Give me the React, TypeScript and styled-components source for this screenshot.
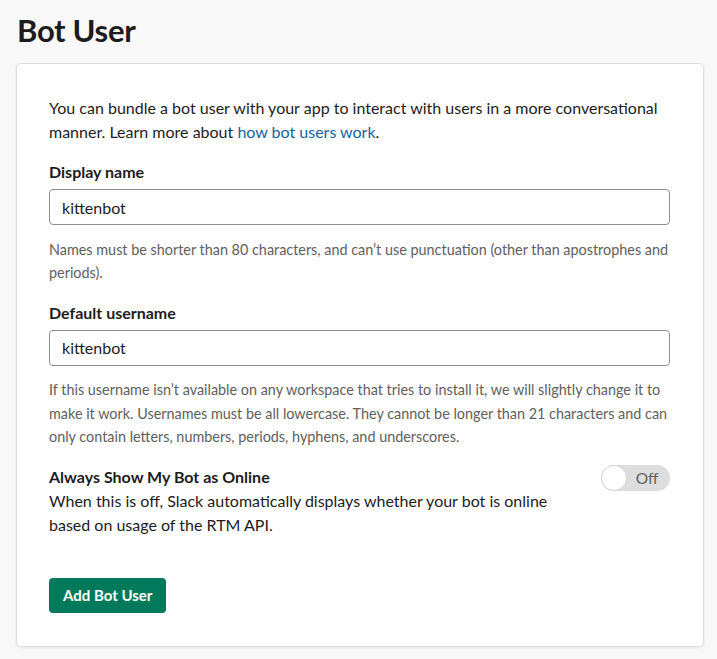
import React from "react";
import styled, { createGlobalStyle } from "styled-components";

const GlobalStyle = createGlobalStyle`
  html, body {
    margin: 0;
    padding: 0;
    background: #f8f8f8;
  }
  body {
    font-family: Lato, "Noto Sans", "Liberation Sans", sans-serif;
    color: #1d1c1d;
    -webkit-font-smoothing: antialiased;
  }
`;

const Page = styled.div`
  padding: 10px 13px 13px 16px;
`;

const Title = styled.h1`
  margin: 0 0 13px 1px;
  font-size: 31px;
  line-height: 40px;
  font-weight: 700;
  color: #1d1c1d;
  letter-spacing: -0.3px;
`;

const Card = styled.section`
  background: #fff;
  border: 1px solid #dddddd;
  border-radius: 5px;
  box-shadow: 0 1px 3px rgba(0, 0, 0, 0.08);
  padding: 32px 33px 33px 32px;
`;

const Intro = styled.p`
  margin: 0;
  font-size: 16px;
  line-height: 24px;
`;

const Link = styled.a`
  color: #1264a3;
  text-decoration: none;
`;

const Label = styled.label`
  display: block;
  margin-top: 16px;
  font-size: 16px;
  line-height: 24px;
  font-weight: 700;
`;

const TextInput = styled.input`
  display: block;
  box-sizing: border-box;
  width: 100%;
  height: 36px;
  margin-top: 5px;
  padding: 0 12px;
  border: 1px solid #8d8d8d;
  border-radius: 4px;
  font-family: inherit;
  font-size: 16px;
  color: #1d1c1d;
  background: #fff;
  outline: none;
`;

const Hint = styled.p`
  margin: 12.5px 0 0;
  font-size: 14.4px;
  line-height: 23.6px;
  color: #616061;
`;

const ToggleRow = styled.div`
  display: flex;
  justify-content: space-between;
  align-items: flex-start;
  margin-top: 16px;
`;

const ToggleText = styled.div`
  max-width: 510px;
  font-size: 16px;
  line-height: 24px;
`;

const ToggleTitle = styled.div`
  font-weight: 700;
`;

const Switch = styled.div`
  display: flex;
  align-items: center;
  box-sizing: border-box;
  width: 69px;
  height: 26px;
  border-radius: 13px;
  background: #dddddd;
  flex-shrink: 0;
`;

const Knob = styled.span`
  box-sizing: border-box;
  width: 26px;
  height: 26px;
  border-radius: 50%;
  background: #fff;
  border: 1px solid #d6d6d6;
`;

const SwitchLabel = styled.span`
  flex: 1;
  text-align: center;
  font-size: 15.5px;
  color: #616061;
  padding-right: 3px;
`;

const PrimaryButton = styled.button`
  display: block;
  margin-top: 41px;
  height: 35px;
  padding: 0 14px;
  border: none;
  border-radius: 4px;
  background: #007a5a;
  color: #fff;
  font-family: inherit;
  font-size: 15px;
  font-weight: 700;
  cursor: pointer;
`;

export default function App() {
  return (
    <Page>
      <GlobalStyle />
      <Title>Bot User</Title>
      <Card>
        <Intro>
          You can bundle a bot user with your app to interact with users in a more conversational
          manner. Learn more about <Link href="#">how bot users work</Link>.
        </Intro>

        <Label>Display name</Label>
        <TextInput defaultValue="kittenbot" />
        <Hint>
          Names must be shorter than 80 characters, and can’t use punctuation (other than apostrophes and
          periods).
        </Hint>

        <Label>Default username</Label>
        <TextInput defaultValue="kittenbot" />
        <Hint>
          If this username isn’t available on any workspace that tries to install it, we will slightly change it to
          make it work. Usernames must be all lowercase. They cannot be longer than 21 characters and can
          only contain letters, numbers, periods, hyphens, and underscores.
        </Hint>

        <ToggleRow>
          <ToggleText>
            <ToggleTitle>Always Show My Bot as Online</ToggleTitle>
            When this is off, Slack automatically displays whether your bot is online based on usage of
            the RTM API.
          </ToggleText>
          <Switch>
            <Knob />
            <SwitchLabel>Off</SwitchLabel>
          </Switch>
        </ToggleRow>

        <PrimaryButton>Add Bot User</PrimaryButton>
      </Card>
    </Page>
  );
}
